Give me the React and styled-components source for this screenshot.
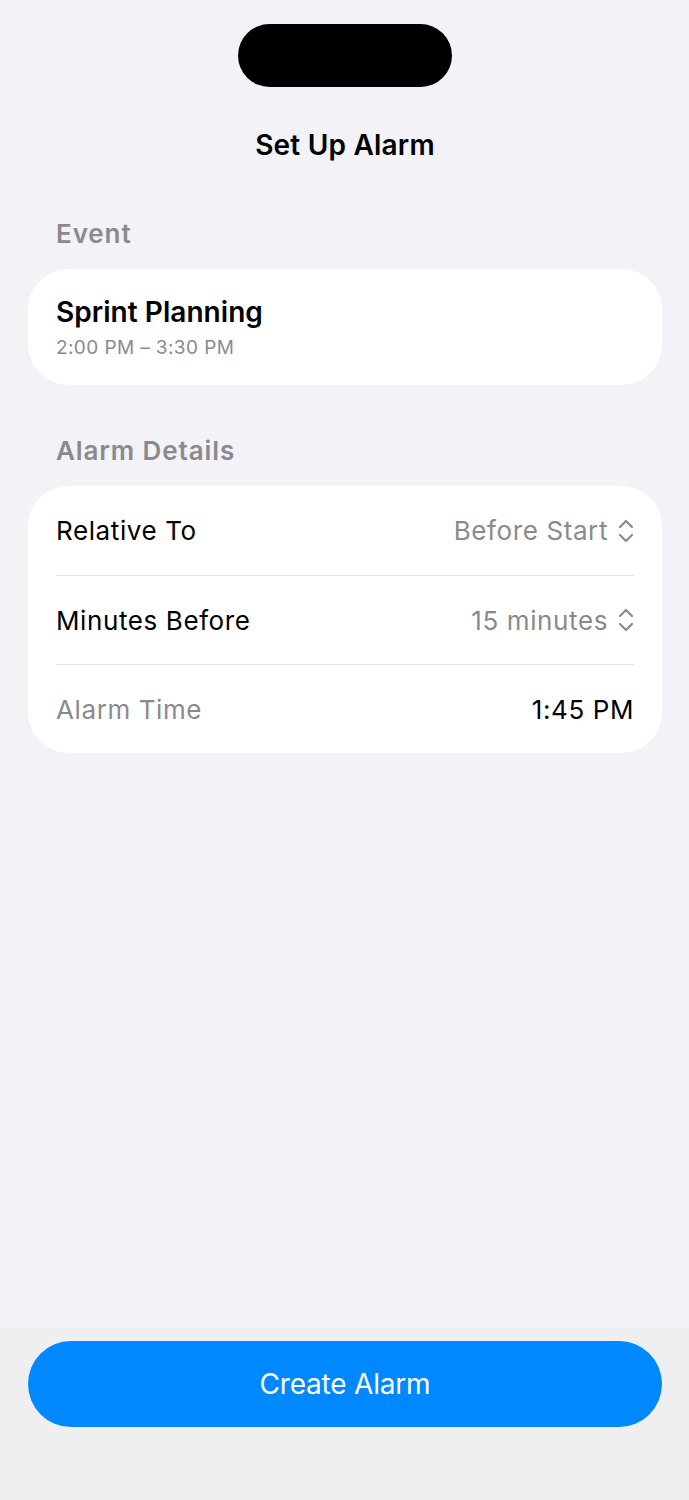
import React from "react";
import styled, { createGlobalStyle } from "styled-components";

const Global = createGlobalStyle`
  html, body { margin: 0; padding: 0; background: #F2F2F7; }
  body { font-family: Inter, "Noto Sans", "Liberation Sans", sans-serif; -webkit-font-smoothing: antialiased; }
  * { box-sizing: border-box; }
`;

const Screen = styled.div`
  width: 689px;
  height: 1500px;
  display: flex;
  flex-direction: column;
  background: #F2F2F7;
  overflow: hidden;
`;

const Content = styled.div`
  flex: 1;
  display: flex;
  flex-direction: column;
  padding: 24px 27px 0 28px;
`;

const Island = styled.div`
  align-self: center;
  width: 214px;
  height: 63px;
  border-radius: 32px;
  background: #000;
`;

const Title = styled.h1`
  margin: 41px 0 0;
  text-align: center;
  font-size: 28px;
  line-height: 34px;
  font-weight: 600;
  color: #000;
  letter-spacing: 0.2px;
`;

const SectionLabel = styled.div`
  margin: ${(p) => p.$top}px 0 19px 28px;
  font-size: 26px;
  line-height: 32px;
  font-weight: 600;
  color: #8A8A8E;
  letter-spacing: 0.9px;
`;

const Card = styled.div`
  background: #fff;
  border-radius: 40px;
  padding: ${(p) => p.$pad};
  display: flex;
  flex-direction: column;
`;

const EventName = styled.div`
  font-size: 28px;
  line-height: 34px;
  font-weight: 600;
  color: #000;
  letter-spacing: 0.05px;
`;

const EventTime = styled.div`
  margin-top: 7px;
  font-size: 19px;
  line-height: 24px;
  color: #8A8A8E;
  letter-spacing: 0.4px;
`;

const Row = styled.div`
  height: 89px;
  display: flex;
  align-items: center;
  justify-content: space-between;
  border-top: ${(p) => (p.$divider ? "1.5px solid #E3E3E8" : "none")};
`;

const RowLabel = styled.span`
  font-size: 26px;
  color: ${(p) => (p.$muted ? "#8A8A8E" : "#000")};
  letter-spacing: 0.6px;
`;

const RowValue = styled.span`
  display: flex;
  align-items: center;
  gap: 10px;
  font-size: 26px;
  color: ${(p) => (p.$strong ? "#000" : "#8A8A8E")};
  letter-spacing: 0.6px;
`;

const Chevrons = () => (
  <svg width="16" height="26" viewBox="0 0 16 26" fill="none" stroke="#8A8A8E" strokeWidth="2.2" strokeLinecap="round" strokeLinejoin="round">
    <path d="M2 9 L8 3 L14 9" />
    <path d="M2 17 L8 23 L14 17" />
  </svg>
);

const BottomBar = styled.div`
  height: 172px;
  background: #EFEFF1;
  padding: 13px 27px 0 28px;
`;

const PrimaryButton = styled.button`
  width: 100%;
  height: 86px;
  border: none;
  border-radius: 43px;
  background: #0088FF;
  color: #fff;
  font-family: inherit;
  font-size: 28px;
  font-weight: 400;
  letter-spacing: -0.2px;
`;

export default function App() {
  return (
    <>
      <Global />
      <Screen>
        <Content>
          <Island />
          <Title>Set Up Alarm</Title>
          <SectionLabel $top={56}>Event</SectionLabel>
          <Card $pad="26px 28px 25px">
            <EventName>Sprint Planning</EventName>
            <EventTime>2:00 PM – 3:30 PM</EventTime>
          </Card>
          <SectionLabel $top={50}>Alarm Details</SectionLabel>
          <Card $pad="0 28px">
            <Row>
              <RowLabel>Relative To</RowLabel>
              <RowValue>Before Start <Chevrons /></RowValue>
            </Row>
            <Row $divider>
              <RowLabel>Minutes Before</RowLabel>
              <RowValue>15 minutes <Chevrons /></RowValue>
            </Row>
            <Row $divider>
              <RowLabel $muted>Alarm Time</RowLabel>
              <RowValue $strong>1:45 PM</RowValue>
            </Row>
          </Card>
        </Content>
        <BottomBar>
          <PrimaryButton>Create Alarm</PrimaryButton>
        </BottomBar>
      </Screen>
    </>
  );
}
